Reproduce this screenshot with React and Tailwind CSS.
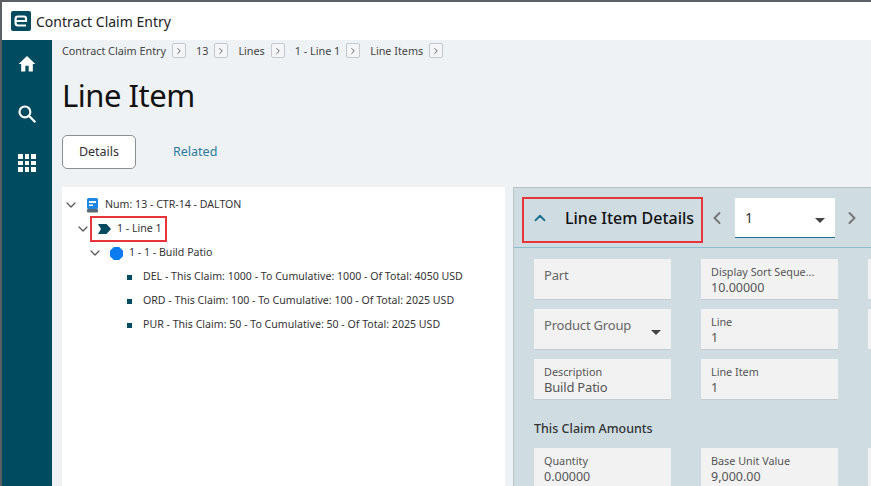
import { ChevronDown, ChevronUp, ChevronLeft, ChevronRight } from "lucide-react";

const font = "font-['Noto_Sans',sans-serif]";

function Crumb({ label, className }) {
  return (
    <div className={`flex items-center ${className}`}>
      <span>{label}</span>
      <span className="ml-[6px] flex h-[15px] w-[14px] items-center justify-center rounded-[2px] border border-[#c4c8cc] bg-[#f4f5f7]">
        <ChevronRight size={10} strokeWidth={2} className="text-[#444]" />
      </span>
    </div>
  );
}

function Caret({ className }) {
  return <span className={`h-0 w-0 border-x-[5px] border-t-[5px] border-x-transparent border-t-[#444] ${className}`} />;
}

function TreeRow({ indent, icon, children, chevron }) {
  return (
    <div className="flex h-6 items-center text-[10.6px] text-[#333]" style={{ paddingLeft: indent }}>
      {chevron && <ChevronDown size={16} strokeWidth={1.8} className="mr-[7px] shrink-0 text-[#555]" />}
      {icon}
      {children}
    </div>
  );
}

function LeafRow({ children }) {
  return (
    <div className="flex h-6 items-center pl-[65px] text-[10.6px] text-[#333]">
      <span className="mr-[11px] h-[5px] w-[5px] bg-[#004b5f]" />
      <span>{children}</span>
    </div>
  );
}

function Field({ label, value, big }) {
  return (
    <div className="h-10 bg-[#f2f2f2] px-[10px] pt-[5px] shadow-[0_1px_0_#c4ccd0]">
      <div className="text-[10.8px] leading-[15px] text-[#555]">{label}</div>
      <div className={`${big ? "text-[13px] tracking-[-0.2px]" : "text-[12.5px]"} leading-[17px] text-[#555]`}>{value}</div>
    </div>
  );
}

function EmptyField({ label, caret }) {
  return (
    <div className="relative flex h-10 items-start bg-[#f2f2f2] px-[10px] pt-[7px] text-[13px] tracking-[-0.2px] text-[#666] shadow-[0_1px_0_#c4ccd0]">
      {label}
      {caret && <Caret className="absolute right-[10px] top-[21px]" />}
    </div>
  );
}

export default function App() {
  return (
    <div className={`flex h-[486px] w-[871px] flex-col overflow-hidden border-t-2 border-l-2 border-[#5a5f63] bg-white ${font}`}>
      {/* title bar */}
      <div className="flex h-[38px] shrink-0 items-center pl-[9px]">
        <svg width="20" height="20" viewBox="0 0 20 20" className="mr-[5px]">
          <rect width="20" height="20" rx="2" fill="#004b5f" />
          <path d="M5 10h10V7.5Q15 5.5 13 5.5H7Q4.6 5.5 4.6 8v4Q4.6 14.5 7 14.5h8" fill="none" stroke="#fff" strokeWidth="2.2" />
        </svg>
        <span className="text-[14px] text-[#222]">Contract Claim Entry</span>
      </div>

      <div className="flex min-h-0 flex-1">
        {/* sidebar */}
        <div className="flex w-[50px] shrink-0 flex-col items-center gap-[30px] bg-[#004b5f] pt-[14px]">
          <svg width="20" height="20" viewBox="0 0 24 24" fill="#fff"><path d="M10 21v-7h4v7h5v-9h3L12 2.5 2 12h3v9z" /></svg>
          <svg width="20" height="20" viewBox="0 0 24 24" fill="none" stroke="#fff" strokeWidth="2.6"><circle cx="9.5" cy="9.5" r="6.5" /><path d="M14.5 14.5L22 22" /></svg>
          <div className="grid grid-cols-3 gap-[2px]">
            {[1, 2, 3, 4, 5, 6, 7, 8, 9].map((n) => (
              <span key={n} className="h-[4.5px] w-[4.5px] bg-white" />
            ))}
          </div>
        </div>

        {/* content */}
        <div className="flex min-w-0 flex-1 flex-col bg-[#eff2f5]">
          <div className="flex h-[19px] items-end whitespace-nowrap pl-[10px] text-[10.8px] text-[#444]">
            <Crumb label="Contract Claim Entry" className="mr-[10px]" />
            <Crumb label="13" className="mr-[10px]" />
            <Crumb label="Lines" className="mr-[10px]" />
            <Crumb label="1 - Line 1" className="mr-[10px]" />
            <Crumb label="Line Items" />
          </div>
          <h1 className="mt-[14px] pl-[10px] text-[31px] leading-[44px] tracking-[-0.5px] text-[#111]">Line Item</h1>
          <div className="mt-[18px] flex items-center pl-[10px]">
            <div className="flex h-[34px] w-[74px] items-center justify-center rounded-[5px] border border-[#8a8f94] bg-white text-[12.5px] text-[#333]">Details</div>
            <div className="ml-[37px] text-[12.5px] text-[#2b7a9b]">Related</div>
          </div>

          <div className="mt-[18px] flex min-h-0 flex-1">
            {/* tree */}
            <div className="ml-[10px] w-[443px] shrink-0 bg-white pt-[6px]">
              <TreeRow indent={1} chevron icon={
                <svg width="13" height="15" viewBox="0 0 13 15" className="mr-[6px]">
                  <rect x="1" y="0" width="11" height="11" rx="1.5" fill="#1e88e5" />
                  <rect x="3" y="3" width="7" height="2" fill="#fff" />
                  <rect x="3" y="6.5" width="4" height="1.5" fill="#fff" />
                  <rect x="1" y="11" width="11" height="3.5" rx="1" fill="#5c6b73" />
                </svg>
              }>
                <span>Num: 13 - CTR-14 - DALTON</span>
              </TreeRow>
              <TreeRow indent={13} chevron icon={
                <svg width="13" height="10" viewBox="0 0 13 10" className="mr-[6px]">
                  <path d="M0 0h8.5L13 5l-4.5 5H0l3-5z" fill="#004b5f" />
                </svg>
              }>
                <span>1 - Line 1</span>
              </TreeRow>
              <TreeRow indent={25} chevron icon={
                <svg width="13" height="13" viewBox="0 0 13 13" className="mr-[6px]">
                  <path d="M3.8 0h5.4L13 3.8v5.4L9.2 13H3.8L0 9.2V3.8z" fill="#0a7cf0" />
                </svg>
              }>
                <span>1 - 1 - Build Patio</span>
              </TreeRow>
              <LeafRow>DEL - This Claim: 1000 - To Cumulative: 1000 - Of Total: 4050 USD</LeafRow>
              <LeafRow>ORD - This Claim: 100 - To Cumulative: 100 - Of Total: 2025 USD</LeafRow>
              <LeafRow>PUR - This Claim: 50 - To Cumulative: 50 - Of Total: 2025 USD</LeafRow>
            </div>

            {/* details */}
            <div className="ml-[8px] min-w-0 flex-1 overflow-hidden border-l border-t border-[#b9c2c8] bg-[#cfdde3]">
              <div className="flex h-[60px] items-center border-b border-[#8fbdd0] pl-[17px]">
                <ChevronUp size={18} strokeWidth={2.4} className="text-[#1f6f8f]" />
                <span className="ml-[16px] text-[16px] font-medium text-[#111]">Line Item Details</span>
                <ChevronLeft size={20} strokeWidth={2.4} className="ml-[13px] text-[#777]" />
                <div className="relative ml-[8px] flex h-10 w-[100px] items-center border-b border-[#1f6f8f] bg-white pl-[10px] text-[14px] text-[#333]">
                  1
                  <Caret className="absolute right-[10px] top-[20px]" />
                </div>
                <ChevronRight size={20} strokeWidth={2.4} className="ml-[7px] text-[#777]" />
              </div>

              <div className="grid w-[400px] grid-cols-[137px_137px_137px] gap-x-[30px] gap-y-[10px] pl-[20px] pt-[11px]">
                <EmptyField label="Part" />
                <Field label="Display Sort Seque..." value="10.00000" />
                <div className="h-10 bg-[#f2f2f2]" />
                <EmptyField label="Product Group" caret />
                <Field label="Line" value="1" />
                <div className="h-10 bg-[#f2f2f2]" />
                <Field label="Description" value="Build Patio" big />
                <Field label="Line Item" value="1" />
              </div>
              <div className="pl-[20px] pt-[21px] text-[12.5px] font-medium leading-[18px] text-[#333]">This Claim Amounts</div>
              <div className="grid w-[400px] grid-cols-[137px_137px_137px] gap-x-[30px] pl-[20px] pt-[10px]">
                <Field label="Quantity" value="0.00000" />
                <Field label="Base Unit Value" value="9,000.00" />
                <div className="h-10 bg-[#f2f2f2]" />
              </div>
            </div>
          </div>
        </div>
      </div>

      {/* highlight boxes over the tree and panel header */}
      <div className="pointer-events-none absolute left-[90px] top-[216px] h-[26px] w-[77px] border-2 border-[#e8353b]" />
      <div className="pointer-events-none absolute left-[522px] top-[197px] h-[46px] w-[181px] border-2 border-[#e8353b]" />
    </div>
  );
}
